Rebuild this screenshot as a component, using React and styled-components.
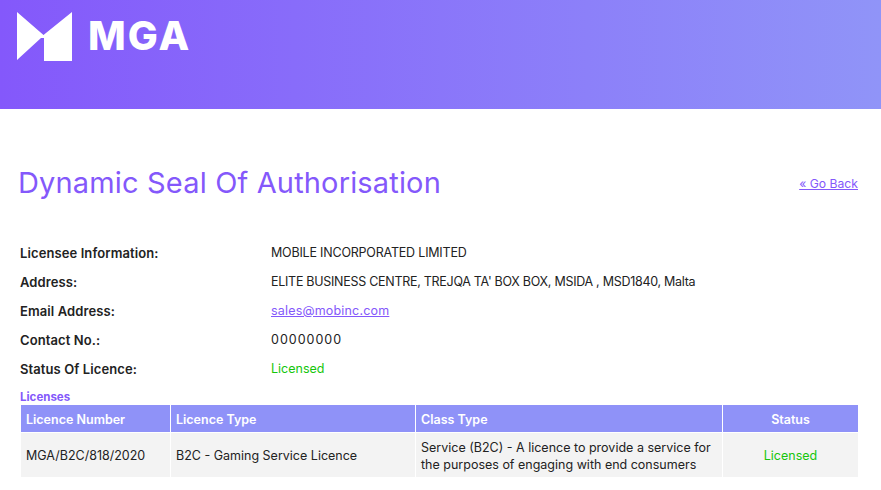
import styled, {createGlobalStyle} from 'styled-components';

const Global = createGlobalStyle`
    html, body {
        margin: 0;
        background: #fff;
        font-family: "Inter", "Liberation Sans", sans-serif;
        color: #212529;
    }
`
const Header = styled.header`
    height: 109px;
    box-sizing: border-box;
    padding: 11px 0 0 17px;
    display: flex;
    align-items: flex-start;
    gap: 15px;
    background: linear-gradient(90deg, #8458fb 0%, #9094f8 100%);
`
const LogoText = styled.div`
    color: #fff;
    font-size: 40px;
    font-weight: 800;
    line-height: 50px;
    letter-spacing: 2px;
`
const Main = styled.main`
    padding: 0 23px 0 19px;
`
const TitleRow = styled.div`
    display: flex;
    justify-content: space-between;
    align-items: center;
    padding-top: 55px;
    height: 38px;
    margin-bottom: 36px;
    font-size: 12.2px;
`
const Title = styled.h1`
    margin: 0 0 0 -1px;
    color: #8458fb;
    font-size: 29px;
    font-weight: 400;
    line-height: 38px;
    letter-spacing: 0.16px;
`
const Link = styled.a`
    color: #8458fb;
    text-decoration: underline;
`
const InfoRow = styled.div`
    display: grid;
    grid-template-columns: 251px 1fr;
    height: 29px;
    margin-left: 1px;
    align-items: center;
    font-size: 12.5px;
    color: #222;
`
const Label = styled.div`
    font-weight: 600;
    font-size: 13px;
    letter-spacing: 0.1px;
`
const Value = styled.div`
    letter-spacing: ${props => props.spacing || 0}px;
`
const Status = styled.span`
    color: #16c60c;
`
const SectionTitle = styled.div`
    color: #8458fb;
    font-size: 11.5px;
    font-weight: 700;
    line-height: 16px;
    margin: 6px 0 0 1px;
`
const Table = styled.table`
    margin-left: 2px;
    width: 837px;
    table-layout: fixed;
    border-collapse: separate;
    border-spacing: 0;
    font-size: 12.5px;
    color: #222;
`
const Th = styled.th`
    background: #8f92f8;
    color: #fff;
    font-weight: 600;
    height: 28px;
    padding: 1px 5px 0;
    box-sizing: border-box;
    text-align: ${props => props.center ? 'center' : 'left'};
    border-right: ${props => props.last ? '0' : '1px solid #fff'};
    border-bottom: 1px solid #fff;
`
const Td = styled.td`
    background: #f3f3f3;
    height: 44px;
    padding: 1px 5px 0;
    box-sizing: border-box;
    line-height: 17px;
    text-align: ${props => props.center ? 'center' : 'left'};
    border-right: ${props => props.last ? '0' : '1px solid #fff'};
`

const info = [
    {label: 'Licensee Information:', value: 'MOBILE INCORPORATED LIMITED', spacing: -0.2},
    {label: 'Address:', value: "ELITE BUSINESS CENTRE, TREJQA TA' BOX BOX, MSIDA , MSD1840, Malta", spacing: -0.28},
    {label: 'Email Address:', value: <Link href="#">sales@mobinc.com</Link>, spacing: 0.18},
    {label: 'Contact No.:', value: '00000000', spacing: 1},
    {label: 'Status Of Licence:', value: <Status>Licensed</Status>},
];

const App = () => {
    return (
        <>
            <Global />
            <Header>
                <svg width="56" height="50" viewBox="0 0 56 50">
                    <path fill="#fff" d="M0 1L26.5 24L55 1V50H27V27H24L0 49Z" />
                </svg>
                <LogoText>MGA</LogoText>
            </Header>
            <Main>
                <TitleRow>
                    <Title>Dynamic Seal Of Authorisation</Title>
                    <Link href="#">« Go Back</Link>
                </TitleRow>
                {info.map(row => (
                    <InfoRow key={row.label}>
                        <Label>{row.label}</Label>
                        <Value spacing={row.spacing}>{row.value}</Value>
                    </InfoRow>
                ))}
                <SectionTitle>Licenses</SectionTitle>
                <Table>
                    <colgroup>
                        <col width="150" />
                        <col width="245" />
                        <col width="307" />
                        <col width="135" />
                    </colgroup>
                    <thead>
                        <tr>
                            <Th>Licence Number</Th>
                            <Th>Licence Type</Th>
                            <Th>Class Type</Th>
                            <Th center last>Status</Th>
                        </tr>
                    </thead>
                    <tbody>
                        <tr>
                            <Td>MGA/B2C/818/2020</Td>
                            <Td>B2C - Gaming Service Licence</Td>
                            <Td>Service (B2C) - A licence to provide a service for the purposes of engaging with end consumers</Td>
                            <Td center last><Status>Licensed</Status></Td>
                        </tr>
                    </tbody>
                </Table>
            </Main>
        </>
    )
}

export default App;
